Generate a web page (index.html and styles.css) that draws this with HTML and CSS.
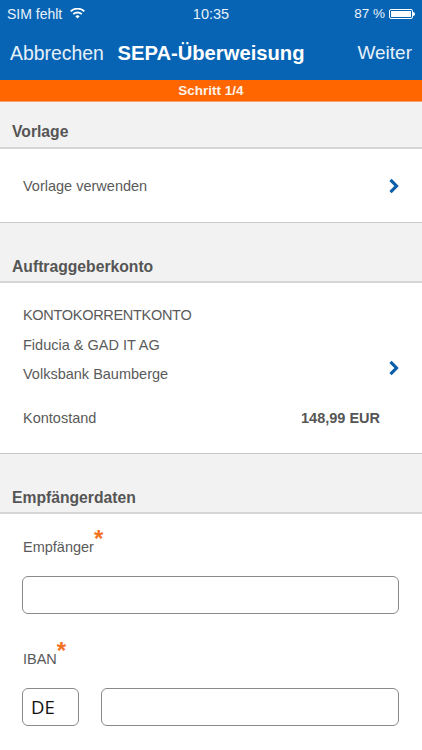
FILE: index.html
```html
<!DOCTYPE html>
<html lang="de">
<head>
<meta charset="utf-8">
<title>SEPA-Überweisung</title>
<link rel="stylesheet" href="styles.css">
</head>
<body>
<div class="screen">
  <header class="top">
    <div class="status">
      <div class="status-left">
        <span>SIM fehlt</span>
        <svg class="wifi" width="15" height="11" viewBox="0 0 15 11"><path d="M7.5 10.6 5.3 8.2a3.2 3.2 0 0 1 4.4 0ZM3.9 6.8 2.6 5.4a7.2 7.2 0 0 1 9.8 0l-1.3 1.4a5.3 5.3 0 0 0-7.2 0ZM1.3 4 0 2.7a11 11 0 0 1 15 0L13.700 4A9.100 9.100 0 0 0 1.300 4Z" fill="#fff"/></svg>
      </div>
      <div class="status-time">10:35</div>
      <div class="status-right">
        <span>87 %</span>
        <span class="battery"><span class="battery-fill"></span></span>
        <span class="battery-tip"></span>
      </div>
    </div>
    <nav class="nav">
      <span class="nav-btn">Abbrechen</span>
      <span class="nav-title">SEPA-Überweisung</span>
      <span class="nav-btn nav-btn-right">Weiter</span>
    </nav>
  </header>
  <div class="step">Schritt 1/4</div>

  <h2 class="sec sec-first">Vorlage</h2>
  <section class="card card-template">
    <div class="card-body">Vorlage verwenden</div>
    <svg class="chev" width="11" height="16" viewBox="0 0 11 16"><path d="M2.500 1.800 8.500 8 2.500 14.200" fill="none" stroke="#0a5fa8" stroke-width="3.200"/></svg>
  </section>

  <h2 class="sec">Auftraggeberkonto</h2>
  <section class="card card-account">
    <div class="card-body">
      <div class="line line-caps">KONTOKORRENTKONTO</div>
      <div class="line">Fiducia &amp; GAD IT AG</div>
      <div class="line">Volksbank Baumberge</div>
      <div class="balance"><span>Kontostand</span><b>148,99 EUR</b></div>
    </div>
    <svg class="chev" width="11" height="16" viewBox="0 0 11 16"><path d="M2.500 1.800 8.500 8 2.500 14.200" fill="none" stroke="#0a5fa8" stroke-width="3.200"/></svg>
  </section>

  <h2 class="sec">Empfängerdaten</h2>
  <section class="form">
    <div class="label">Empfänger<span class="req">*</span></div>
    <div class="field"></div>
    <div class="label label-iban">IBAN<span class="req">*</span></div>
    <div class="iban-row">
      <div class="field field-cc">DE</div>
      <div class="field field-grow"></div>
    </div>
  </section>
</div>
</body>
</html>
```
FILE: styles.css
```css
* { box-sizing: border-box; }
html, body { margin: 0; padding: 0; }
body { width: 422px; height: 750px; overflow: hidden; background: #fff; font-family: "Liberation Sans", Arial, sans-serif; color: #555; }
.screen { width: 422px; height: 750px; overflow: hidden; display: flex; flex-direction: column; background: #fff; }

.top { height: 80px; background: #0764b4; color: #fff; flex: none; }
.status { height: 27px; padding: 0 7px; display: grid; grid-template-columns: 1fr auto 1fr; align-items: center; font-size: 14px; color: #eaf2fa; }
.status-left { display: flex; align-items: center; gap: 8px; }
.wifi { flex: none; }
.status-time { font-size: 14.500px; }
.status-right { display: flex; justify-content: flex-end; align-items: center; font-size: 13.500px; }
.battery { width: 24px; height: 10px; margin-left: 4px; padding: 1px; border: 1px solid #fff; border-radius: 2px; display: block; }
.battery-fill { display: block; width: 20px; height: 6px; background: #fff; }
.battery-tip { width: 2px; height: 4px; background: #fff; border-radius: 0 2px 2px 0; }

.nav { height: 53px; padding: 0 10px 1px; display: grid; grid-template-columns: 1fr auto 1fr; align-items: center; }
.nav-btn { font-size: 19.400px; color: #e6f0f9; }
.nav-btn-right { text-align: right; font-size: 19px; }
.nav-title { font-size: 20.200px; font-weight: 700; }

.step { height: 22px; flex: none; background: #ff6600; color: #fdf3ea; font-size: 13.500px; font-weight: 700; text-align: center; line-height: 21px; border-bottom: 1px solid #f8a06a; }

.sec { margin: 0; flex: none; height: 60px; padding: 0 12px 5px; display: flex; align-items: flex-end; background: #f2f2f2; border-bottom: 2px solid #d6d6d6; font-size: 15.700px; font-weight: 700; color: #555; }
.sec-first { height: 47px; padding-bottom: 6px; }

.card { flex: none; display: flex; align-items: center; padding: 0 23px; background: #fff; border-bottom: 1px solid #c9c9c9; font-size: 14.500px; color: #5a5a5a; }
.card-template { height: 74px; }
.card-account { height: 171px; }
.card-body { flex: 1; }
.chev { flex: none; margin-left: 8px; }
.card-account .card-body { align-self: flex-start; padding-top: 18px; }
.line { height: 29.500px; line-height: 29.500px; }
.line-caps { letter-spacing: -0.300px; }
.balance { display: flex; justify-content: space-between; margin-top: 14px; line-height: 29px; }
.balance b { color: #555; }

.form { flex: 1; background: #fff; padding: 0 23px 0 22px; font-size: 14.500px; color: #5a5a5a; }
.label { height: 62px; padding: 23px 0 0 1px; line-height: 20px; }
.label-iban { height: 74px; padding-top: 35px; }
.req { color: #f4711f; font-size: 24px; font-weight: 700; line-height: 0; position: relative; top: -5px; }
.field { height: 38px; border: 1px solid #8a8a8a; border-radius: 6px; background: #fff; }
.iban-row { display: flex; gap: 22px; }
.field-cc { width: 57px; flex: none; padding-left: 8px; line-height: 35px; font-size: 18.500px; color: #111; font-family: "Open Sans", "Liberation Sans", sans-serif; }
.field-grow { flex: 1; }
```
